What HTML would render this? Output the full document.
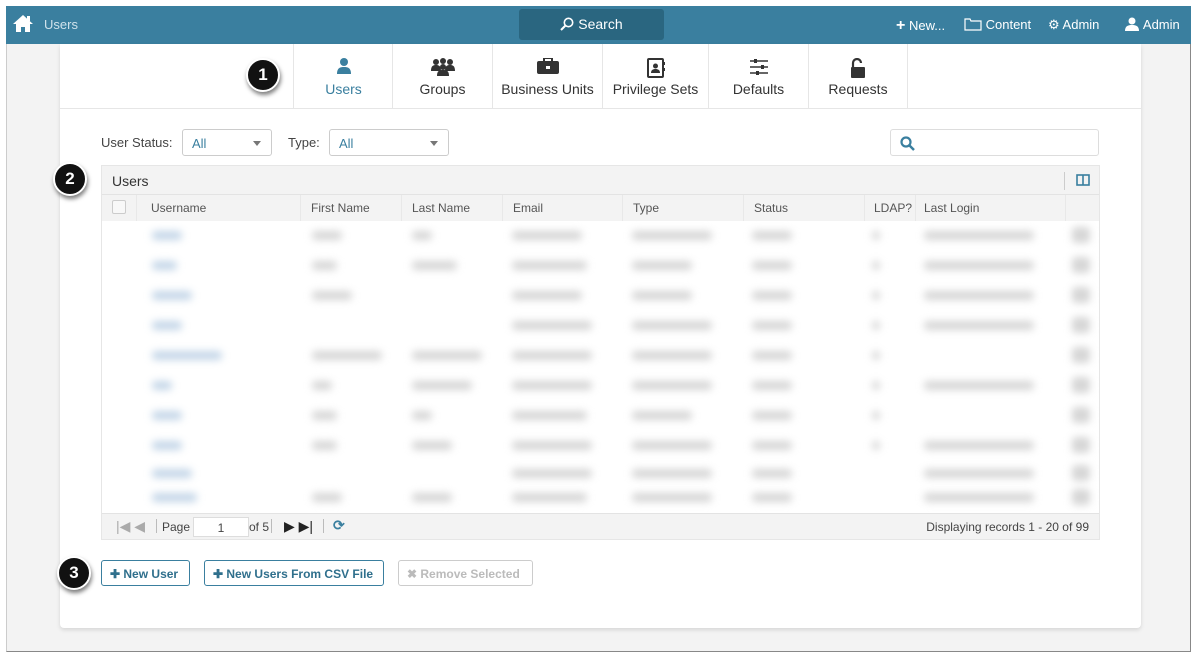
<!DOCTYPE html>
<html><head><meta charset="utf-8"><style>
*{box-sizing:border-box;margin:0;padding:0}
body{width:1196px;height:656px;background:#fff;font-family:"Liberation Sans",Arial,sans-serif;position:relative;overflow:hidden}
.frame{position:absolute;left:6px;top:6px;width:1185px;height:646px;background:#f3f3f3;border:1px solid #888;border-top:none;border-left:1px solid #ccc}
.hdr{position:absolute;left:6px;top:6px;width:1185px;height:38px;background:#3a7f9f}
.hdr .t{position:absolute;color:#fff;font-size:13px;top:11px}
.search{position:absolute;left:513px;top:3px;width:145px;height:31px;background:#2a6680;border-radius:3px;color:#fff;font-size:14px;text-align:center;line-height:31px}
.card{position:absolute;left:60px;top:44px;width:1081px;height:584px;background:#fff;border-radius:0 0 4px 4px;box-shadow:0 2px 4px rgba(0,0,0,.12)}
.tabs{position:absolute;left:60px;top:44px;width:1081px;height:65px;border-bottom:1px solid #e6e6e6}
.tab{position:absolute;top:0;height:64px;border-left:1px solid #e6e6e6;text-align:center;font-size:14px;color:#333}
.tab .lb{position:absolute;left:0;right:0;top:37px}
.tab svg{position:absolute;left:50%;top:14px;transform:translateX(-50%)}
.badge{position:absolute;width:34px;height:34px;border-radius:50%;background:#111;border:2px solid #fff;box-shadow:1px 3px 4px rgba(0,0,0,.5);color:#fff;font-weight:bold;font-size:17px;text-align:center;line-height:30px}
.lbl{position:absolute;font-size:13px;color:#444;top:135px}
.sel{position:absolute;top:129px;height:27px;border:1px solid #ccc;border-radius:3px;font-size:13px;color:#3a7f9f;padding:6px 9px}
.sel:after{content:"";position:absolute;right:10px;top:11px;border:4px solid transparent;border-top:5px solid #777}
.grid{position:absolute;left:101px;top:165px;width:999px;height:375px;background:#f3f3f3;border:1px solid #e6e6e6}
.gh{position:absolute;left:0;top:0;width:100%;height:29px;border-bottom:1px solid #e3e3e3;font-size:14px;color:#333;padding:7px 10px}
.cols{position:absolute;left:0;top:29px;width:100%;height:26px;font-size:12px;color:#555}
.cols span{position:absolute;top:6px}
.cols i{position:absolute;top:0;height:26px;border-left:1px solid #e8e8e8}
.body{position:absolute;left:0;top:55px;width:100%;height:292px;background:#fff;overflow:hidden}
.b{position:absolute;height:9px;background:#d6d6d6;filter:blur(4px);border-radius:4px}
.body .b[style*="b9cde0"]{background:#c4d6e8!important}
.pg{position:absolute;left:0;top:347px;width:100%;height:27px;border-top:1px solid #e3e3e3;font-size:12px;color:#444}
.btn{position:absolute;top:560px;height:26px;border:1px solid #3a7f9f;border-radius:3px;font-size:12px;font-weight:bold;color:#2f6f8c;padding:6px 8px}
</style></head><body>
<div class="frame"></div>
<div class="hdr">
 <svg style="position:absolute;left:6px;top:8px" width="22" height="19" viewBox="0 0 22 19"><path d="M11 1L1 10h3v8h5v-5h4v5h5v-8h3z" fill="#fff"/><rect x="15" y="2" width="3" height="5" fill="#fff"/></svg>
 <div class="t" style="left:38px;color:#cfe2eb">Users</div>
 <div class="search"><svg width="14" height="14" viewBox="0 0 14 14" style="vertical-align:-2px"><circle cx="8.5" cy="5.5" r="4.2" stroke="#fff" stroke-width="1.6" fill="none"/><path d="M5.5 8.5L1 13" stroke="#fff" stroke-width="2"/></svg> Search</div>
 <div class="t" style="left:890px"><b style="font-size:16px">+</b> New...</div>
 <div class="t" style="left:958px"><svg width="18" height="13" viewBox="0 0 18 13" style="vertical-align:-2px"><path d="M1 1h5l1 2h10v9H1z" stroke="#fff" fill="none" stroke-width="1.2"/></svg> Content</div>
 <div class="t" style="left:1042px">⚙ Admin</div>
 <div class="t" style="left:1118px"><svg width="16" height="14" viewBox="0 0 16 14" style="vertical-align:-2px"><circle cx="8" cy="4" r="3.5" fill="#fff"/><path d="M1 14c0-5 3-6 7-6s7 1 7 6z" fill="#fff"/></svg> Admin</div>
</div>
<div class="card"></div>
<div class="tabs">
 <div class="tab" style="left:233px;width:100px"><svg width="14" height="16" viewBox="0 0 14 16"><circle cx="7" cy="4" r="4" fill="#3a7f9f"/><path d="M0 16c0-6 3-7 7-7s7 1 7 7z" fill="#3a7f9f"/></svg><div class="lb" style="color:#3a7f9f">Users</div></div>
 <div class="tab" style="left:332px;width:100px"><svg width="24" height="18" viewBox="0 0 24 18"><circle cx="5" cy="4" r="3" fill="#333"/><circle cx="19" cy="4" r="3" fill="#333"/><circle cx="12" cy="3" r="3" fill="#333"/><path d="M0 13c0-5 2-6 5-6s5 1 5 6zM14 13c0-5 2-6 5-6s5 1 5 6z" fill="#333"/><circle cx="12" cy="9" r="3" fill="#333"/><path d="M6 18c0-5 2-6 6-6s6 1 6 6z" fill="#333"/></svg><div class="lb">Groups</div></div>
 <div class="tab" style="left:432px;width:110px"><svg width="22" height="16" viewBox="0 0 22 16"><rect x="7" y="0" width="8" height="4" stroke="#333" stroke-width="2" fill="none"/><rect x="0" y="3" width="22" height="13" rx="2" fill="#333"/><rect x="9" y="8" width="4" height="3" fill="#fff"/></svg><div class="lb">Business Units</div></div>
 <div class="tab" style="left:542px;width:106px"><svg width="18" height="20" viewBox="0 0 18 20"><rect x="1" y="1" width="15" height="18" rx="1" stroke="#333" stroke-width="2" fill="#fff"/><circle cx="8.5" cy="8" r="2.5" fill="#333"/><path d="M4 15c0-3 2-4 4.5-4s4.5 1 4.5 4z" fill="#333"/><rect x="16" y="4" width="2" height="3" fill="#333"/><rect x="16" y="10" width="2" height="3" fill="#333"/></svg><div class="lb">Privilege Sets</div></div>
 <div class="tab" style="left:648px;width:100px"><svg width="18" height="18" viewBox="0 0 18 18"><path d="M0 3h18M0 9h18M0 15h18" stroke="#333" stroke-width="1.5"/><rect x="4" y="1" width="3" height="4" fill="#333"/><rect x="11" y="7" width="3" height="4" fill="#333"/><rect x="6" y="13" width="3" height="4" fill="#333"/></svg><div class="lb">Defaults</div></div>
 <div class="tab" style="left:748px;width:100px;border-right:1px solid #e6e6e6"><svg width="16" height="20" viewBox="0 0 16 20"><path d="M3 9V5a4 4 0 0 1 8 0" stroke="#333" stroke-width="2.2" fill="none"/><rect x="1" y="9" width="14" height="11" rx="1" fill="#333"/></svg><div class="lb">Requests</div></div>
</div>
<div class="badge" style="left:246px;top:58px">1</div>
<div class="badge" style="left:53px;top:162px">2</div>
<div class="badge" style="left:57px;top:556px">3</div>
<div class="lbl" style="left:101px">User Status:</div>
<div class="sel" style="left:182px;width:90px">All</div>
<div class="lbl" style="left:288px">Type:</div>
<div class="sel" style="left:329px;width:120px">All</div>
<div style="position:absolute;left:890px;top:129px;width:209px;height:27px;border:1px solid #ddd;border-radius:3px"><svg style="position:absolute;left:9px;top:6px" width="15" height="15" viewBox="0 0 15 15"><circle cx="6" cy="6" r="4.5" stroke="#3a7f9f" stroke-width="2.2" fill="none"/><path d="M9.5 9.5L14 14" stroke="#3a7f9f" stroke-width="2.5"/></svg></div>
<div class="grid">
 <div class="gh">Users<span style="position:absolute;right:34px;top:6px;height:18px;border-left:1px solid #ccc"></span><svg style="position:absolute;right:9px;top:8px" width="14" height="12" viewBox="0 0 14 12"><rect x="1" y="1" width="12" height="10" stroke="#3a7f9f" stroke-width="1.6" fill="none"/><path d="M7 1v10" stroke="#3a7f9f" stroke-width="1.6"/></svg></div>
 <div class="cols">
  <div style="position:absolute;left:10px;top:5px;width:14px;height:14px;border:1px solid #ccc;border-radius:2px;background:#f8f8f8"></div>
  <i style="left:34px"></i><span style="left:49px">Username</span>
  <i style="left:198px"></i><span style="left:209px">First Name</span>
  <i style="left:299px"></i><span style="left:310px">Last Name</span>
  <i style="left:400px"></i><span style="left:411px">Email</span>
  <i style="left:520px"></i><span style="left:531px">Type</span>
  <i style="left:641px"></i><span style="left:652px">Status</span>
  <i style="left:762px"></i><span style="left:772px">LDAP?</span>
  <i style="left:813px"></i><span style="left:822px">Last Login</span>
  <i style="left:963px"></i>
 </div>
 <div class="body">
  <div class="b" style="left:50px;top:10px;width:30px;background:#b9cde0"></div><div class="b" style="left:210px;top:10px;width:30px"></div><div class="b" style="left:310px;top:10px;width:20px"></div><div class="b" style="left:410px;top:10px;width:70px"></div><div class="b" style="left:530px;top:10px;width:80px"></div><div class="b" style="left:650px;top:10px;width:40px"></div><div class="b" style="left:770px;top:10px;width:8px"></div><div class="b" style="left:822px;top:10px;width:110px"></div><div class="b" style="left:970px;top:6px;width:18px;height:16px"></div>
  <div class="b" style="left:50px;top:40px;width:25px;background:#b9cde0"></div><div class="b" style="left:210px;top:40px;width:25px"></div><div class="b" style="left:310px;top:40px;width:45px"></div><div class="b" style="left:410px;top:40px;width:75px"></div><div class="b" style="left:530px;top:40px;width:60px"></div><div class="b" style="left:650px;top:40px;width:40px"></div><div class="b" style="left:770px;top:40px;width:8px"></div><div class="b" style="left:822px;top:40px;width:110px"></div><div class="b" style="left:970px;top:36px;width:18px;height:16px"></div>
  <div class="b" style="left:50px;top:70px;width:40px;background:#b9cde0"></div><div class="b" style="left:210px;top:70px;width:40px"></div><div class="b" style="left:410px;top:70px;width:70px"></div><div class="b" style="left:530px;top:70px;width:60px"></div><div class="b" style="left:650px;top:70px;width:40px"></div><div class="b" style="left:770px;top:70px;width:8px"></div><div class="b" style="left:822px;top:70px;width:110px"></div><div class="b" style="left:970px;top:66px;width:18px;height:16px"></div>
  <div class="b" style="left:50px;top:100px;width:30px;background:#b9cde0"></div><div class="b" style="left:410px;top:100px;width:80px"></div><div class="b" style="left:530px;top:100px;width:80px"></div><div class="b" style="left:650px;top:100px;width:40px"></div><div class="b" style="left:770px;top:100px;width:8px"></div><div class="b" style="left:822px;top:100px;width:110px"></div><div class="b" style="left:970px;top:96px;width:18px;height:16px"></div>
  <div class="b" style="left:50px;top:130px;width:70px;background:#b9cde0"></div><div class="b" style="left:210px;top:130px;width:70px"></div><div class="b" style="left:310px;top:130px;width:70px"></div><div class="b" style="left:410px;top:130px;width:80px"></div><div class="b" style="left:530px;top:130px;width:80px"></div><div class="b" style="left:650px;top:130px;width:40px"></div><div class="b" style="left:770px;top:130px;width:8px"></div><div class="b" style="left:970px;top:126px;width:18px;height:16px"></div>
  <div class="b" style="left:50px;top:160px;width:20px;background:#b9cde0"></div><div class="b" style="left:210px;top:160px;width:20px"></div><div class="b" style="left:310px;top:160px;width:60px"></div><div class="b" style="left:410px;top:160px;width:80px"></div><div class="b" style="left:530px;top:160px;width:80px"></div><div class="b" style="left:650px;top:160px;width:40px"></div><div class="b" style="left:770px;top:160px;width:8px"></div><div class="b" style="left:822px;top:160px;width:110px"></div><div class="b" style="left:970px;top:156px;width:18px;height:16px"></div>
  <div class="b" style="left:50px;top:190px;width:30px;background:#b9cde0"></div><div class="b" style="left:210px;top:190px;width:25px"></div><div class="b" style="left:310px;top:190px;width:20px"></div><div class="b" style="left:410px;top:190px;width:75px"></div><div class="b" style="left:530px;top:190px;width:60px"></div><div class="b" style="left:650px;top:190px;width:40px"></div><div class="b" style="left:770px;top:190px;width:8px"></div><div class="b" style="left:970px;top:186px;width:18px;height:16px"></div>
  <div class="b" style="left:50px;top:220px;width:30px;background:#b9cde0"></div><div class="b" style="left:210px;top:220px;width:25px"></div><div class="b" style="left:310px;top:220px;width:40px"></div><div class="b" style="left:410px;top:220px;width:80px"></div><div class="b" style="left:530px;top:220px;width:80px"></div><div class="b" style="left:650px;top:220px;width:40px"></div><div class="b" style="left:770px;top:220px;width:8px"></div><div class="b" style="left:822px;top:220px;width:110px"></div><div class="b" style="left:970px;top:216px;width:18px;height:16px"></div>
  <div class="b" style="left:50px;top:248px;width:40px;background:#b9cde0"></div><div class="b" style="left:410px;top:248px;width:80px"></div><div class="b" style="left:530px;top:248px;width:80px"></div><div class="b" style="left:650px;top:248px;width:40px"></div><div class="b" style="left:822px;top:248px;width:110px"></div><div class="b" style="left:970px;top:244px;width:18px;height:16px"></div>
  <div class="b" style="left:50px;top:272px;width:45px;background:#b9cde0"></div><div class="b" style="left:210px;top:272px;width:30px"></div><div class="b" style="left:310px;top:272px;width:40px"></div><div class="b" style="left:410px;top:272px;width:75px"></div><div class="b" style="left:530px;top:272px;width:80px"></div><div class="b" style="left:650px;top:272px;width:40px"></div><div class="b" style="left:822px;top:272px;width:110px"></div><div class="b" style="left:970px;top:268px;width:18px;height:16px"></div>
 </div>
 <div class="pg">
  <span style="position:absolute;left:14px;top:4px;color:#aaa;font-size:14px">|◀ ◀</span>
  <span style="position:absolute;left:54px;top:5px;height:14px;border-left:1px solid #bbb"></span>
  <span style="position:absolute;left:60px;top:6px">Page</span>
  <div style="position:absolute;left:91px;top:3px;width:56px;height:20px;background:#fff;border:1px solid #ddd;text-align:center;padding-top:3px">1</div>
  <span style="position:absolute;left:147px;top:6px">of 5</span>
  <span style="position:absolute;left:169px;top:5px;height:14px;border-left:1px solid #bbb"></span>
  <span style="position:absolute;left:182px;top:4px;color:#222;font-size:14px">▶ ▶|</span>
  <span style="position:absolute;left:221px;top:5px;height:14px;border-left:1px solid #bbb"></span>
  <span style="position:absolute;left:231px;top:3px;color:#3a7f9f;font-weight:bold;font-size:14px">⟳</span>
  <span style="position:absolute;right:10px;top:6px">Displaying records 1 - 20 of 99</span>
 </div>
</div>
<div class="btn" style="left:101px;width:89px">✚ New User</div>
<div class="btn" style="left:204px;width:180px">✚ New Users From CSV File</div>
<div class="btn" style="left:398px;width:135px;border-color:#ccc;color:#bbb">✖ Remove Selected</div>
</body></html>
